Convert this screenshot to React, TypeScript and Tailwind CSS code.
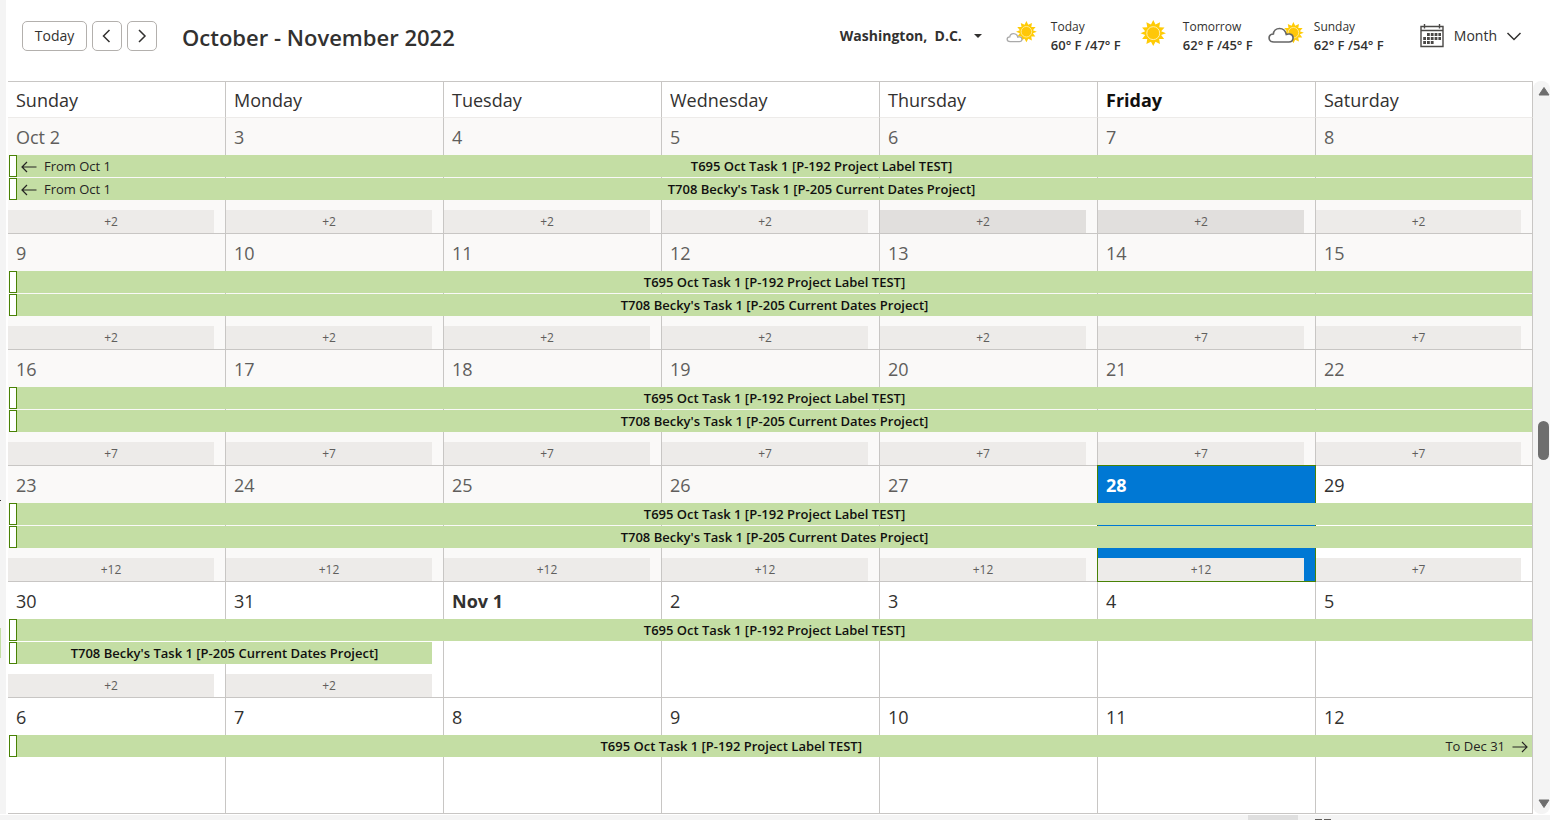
import React from "react";

type Day = { label: string; more?: string; past?: boolean; today?: boolean; strong?: boolean; dark?: boolean };
type Bar = { title: string; from?: string; to?: string; span?: "two" };
type Week = { days: Day[]; bars: Bar[] };

const A = "T695 Oct Task 1 [P-192 Project Label TEST]";
const B = "T708 Becky's Task 1 [P-205 Current Dates Project]";
const both: Bar[] = [{ title: A }, { title: B }];
const past = (label: string, more: string, dark = false): Day => ({ label, more, past: true, dark });

const weeks: Week[] = [
  {
    days: [past("Oct 2", "+2"), past("3", "+2"), past("4", "+2"), past("5", "+2"), past("6", "+2", true), past("7", "+2", true), past("8", "+2")],
    bars: [{ title: A, from: "From Oct 1" }, { title: B, from: "From Oct 1" }],
  },
  {
    days: [past("9", "+2"), past("10", "+2"), past("11", "+2"), past("12", "+2"), past("13", "+2"), past("14", "+7"), past("15", "+7")],
    bars: both,
  },
  {
    days: [past("16", "+7"), past("17", "+7"), past("18", "+7"), past("19", "+7"), past("20", "+7"), past("21", "+7"), past("22", "+7")],
    bars: both,
  },
  {
    days: [past("23", "+12"), past("24", "+12"), past("25", "+12"), past("26", "+12"), past("27", "+12"), { label: "28", more: "+12", today: true }, { label: "29", more: "+7" }],
    bars: both,
  },
  {
    days: [{ label: "30", more: "+2" }, { label: "31", more: "+2" }, { label: "Nov 1", strong: true }, { label: "2" }, { label: "3" }, { label: "4" }, { label: "5" }],
    bars: [{ title: A }, { title: B, span: "two" }],
  },
  {
    days: ["6", "7", "8", "9", "10", "11", "12"].map((label) => ({ label })),
    bars: [{ title: A, to: "To Dec 31" }],
  },
];

const weekdays = ["Sunday", "Monday", "Tuesday", "Wednesday", "Thursday", "Friday", "Saturday"];
const colStart = ["col-start-1", "col-start-2", "col-start-3", "col-start-4", "col-start-5", "col-start-6", "col-start-7"];
const rowStart = ["row-start-2", "row-start-3"];

function Arrow({ flip = false }: { flip?: boolean }) {
  return (
    <svg viewBox="0 0 16 12" className={flip ? "h-3 w-4 shrink-0 rotate-180" : "h-3 w-4 shrink-0"} fill="none" stroke="#252423" strokeWidth="1.2" aria-hidden="true">
      <path d="M15.5 6H1M6 1 1 6l5 5" />
    </svg>
  );
}

function Chevron({ d }: { d: string }) {
  return (
    <svg viewBox="0 0 16 16" className="size-4" fill="none" stroke="#323130" strokeWidth="1.5" aria-hidden="true">
      <path d={d} />
    </svg>
  );
}

function Sun() {
  return (
    <>
      <path
        fill="#ffcb05"
        d="M13 0l2.3 4.600L20 2.400l-.9 5 5.400.2-3.400 4 4.900 1.900-4.900 1.800 3 4.100-5.100.1.900 5-4.600-2.300L13 26.500l-2.300-4.400L6 24.500l.9-5-5.200-.1 3.100-4.100L0 13.500l4.800-1.900-3.200-4 5.300-.2-.9-5 4.700 2.200z"
      />
      <circle cx="13" cy="13.4" r="6.6" fill="#ffc708" stroke="#fff0b0" strokeWidth="1" />
    </>
  );
}

const CLOUD = "M5.5 14.5h14a4 4 0 0 0 .8-7.9c-1.4-.3-2.4 0-3.2.4C16.300 3 13.600 1 10.800 1 7.500 1 5.200 3.500 5 6.600 2.600 6.700 1 8.400 1 10.500c0 2.300 1.900 4 4.500 4z";

function PartlyCloudy() {
  return (
    <svg viewBox="0 0 34 26" className="mt-[2px] h-[26px] w-[34px] self-start" aria-hidden="true">
      <g transform="translate(10 1) scale(.8)"><Sun /></g>
      <path transform="translate(.5 13) scale(.66 .6)" d={CLOUD} fill="#fff" stroke="#aaa" strokeWidth="2" />
    </svg>
  );
}

function Sunny() {
  return (
    <svg viewBox="0 0 34 26" className="mt-[2px] h-[26px] w-[34px] self-start" aria-hidden="true">
      <g transform="translate(2.5 0) scale(.98)"><Sun /></g>
    </svg>
  );
}

function MostlyCloudy() {
  return (
    <svg viewBox="0 0 36 26" className="mt-[2px] h-[26px] w-9 self-start" aria-hidden="true">
      <g transform="translate(15 2) scale(.8)"><Sun /></g>
      <path transform="translate(0 7.500) scale(1.070 1)" d={CLOUD} fill="#fff" stroke="#666" strokeWidth="1.5" />
    </svg>
  );
}

function CalendarIcon() {
  return (
    <svg viewBox="0 0 24 24" className="size-6" fill="none" stroke="#4a4846" strokeWidth="1.4" aria-hidden="true">
      <path d="M1 2.500h22v20H1zM1 6.500h22M4.500 0v4.500M19.500 0v4.500" />
      <path strokeWidth="2.800" strokeDasharray="2.800 1" d="M7 10.500h14M3.200 14.500h17.800M3.200 18.500h10.400" />
    </svg>
  );
}

function Forecast({ icon, day, temps, label }: { icon: React.ReactNode; day: string; temps: string; label: string }) {
  return (
    <div className={label}>
      {icon}
      <div className="leading-[18px] whitespace-pre">
        <div className="text-[12px]">{day}</div>
        <div className="text-[13px] font-semibold">{temps}</div>
      </div>
    </div>
  );
}

function DayCell({ day, index }: { day: Day; index: number }) {
  let cell = "row-start-1 row-span-4 flex min-w-0 flex-col justify-between border-b border-r ";
  if (day.today) cell += "z-[1] -mt-px -ml-px border-t border-l border-[#498205] bg-[#0078d4] font-bold text-white ";
  else if (day.past) cell += "border-[#c8c6c4] bg-[#faf9f8] text-[#605e5c] ";
  else cell += "border-[#c8c6c4] bg-white text-[#323130] ";
  if (day.strong) cell += "font-bold ";
  return (
    <div className={cell + colStart[index]}>
      <div className="px-2 pt-[7px] text-[18px] leading-6">{day.label}</div>
      {day.more && (
        <button
          className={
            "mr-[11px] h-[23px] pt-px text-[12px] leading-[22px] font-normal text-[#605e5c] " + (day.dark ? "bg-[#e1dfdd]" : "bg-[#edebe9]")
          }
        >
          {day.more}
        </button>
      )}
    </div>
  );
}

function EventBar({ bar, row }: { bar: Bar; row: number }) {
  return (
    <button
      className={
        "z-[2] ml-px flex h-[22px] min-w-0 items-end bg-[#c4dea4] text-[13px] leading-[21px] text-[#252423] " +
        rowStart[row] +
        (bar.span === "two" ? " col-start-1 col-span-2 mr-3" : " col-start-1 col-span-7 mr-px")
      }
    >
      <span className="w-2 shrink-0 self-stretch border border-[#498205] bg-white" />
      {bar.from && (
        <span className="flex items-center gap-[7px] pl-1">
          <Arrow />
          {bar.from}
        </span>
      )}
      <span className="min-w-0 flex-1 truncate text-center font-semibold text-[#11100f]">{bar.title}</span>
      {bar.to && (
        <span className="flex items-center gap-[7px] pr-1">
          {bar.to}
          <Arrow flip />
        </span>
      )}
    </button>
  );
}

export default function App() {
  return (
    <div className="flex min-h-screen flex-col bg-[#f4f4f4] font-['Open_Sans','Noto_Sans',sans-serif] text-[#323130]">
      <div className="flex flex-1">
        <div className="flex w-[6px] shrink-0 flex-col pt-[500px]">
          <div className="h-px w-px bg-[#323130]" />
          <div className="mt-[127px] h-[30px] w-px bg-[#c4dea4]" />
        </div>
        <main className="flex min-w-0 flex-1 flex-col bg-white pl-[2px]">
          <header className="flex h-[81px] shrink-0 items-start justify-between pt-[18px] pl-[14px]">
            <div className="flex items-center pt-[3px]">
              <button className="h-[30px] w-[65px] rounded-[5px] border border-[#b3b0ad] text-[14px] leading-5">Today</button>
              <button aria-label="Previous" className="ml-[5px] flex size-[30px] items-center justify-center rounded-[5px] border border-[#b3b0ad]">
                <Chevron d="M10.500 2 4.500 8l6 6" />
              </button>
              <button aria-label="Next" className="ml-[5px] flex size-[30px] items-center justify-center rounded-[5px] border border-[#b3b0ad]">
                <Chevron d="M5 2l6 6-6 6" />
              </button>
              <h1 className="ml-[25px] pt-[2px] text-[22px] leading-7 font-semibold">October - November 2022</h1>
            </div>
            <div className="flex items-center pr-[28px]">
              <button className="flex items-center gap-3 text-[14px] leading-5 font-bold whitespace-pre">
                Washington,  D.C.
                <svg viewBox="0 0 8 4" className="h-1 w-2" fill="#323130" aria-hidden="true"><path d="M0 0h8L4 4z" /></svg>
              </button>
              <Forecast icon={<PartlyCloudy />} day="Today" temps="60° F /47° F" label="ml-6 flex w-[132px] items-center gap-[11px]" />
              <Forecast icon={<Sunny />} day="Tomorrow" temps="62° F /45° F" label="flex w-[130px] items-center gap-[11px]" />
              <Forecast icon={<MostlyCloudy />} day="Sunday" temps="62° F /54° F" label="flex w-[152px] items-center gap-[10px]" />
              <button className="flex items-center text-[14px] leading-5">
                <CalendarIcon />
                <span className="mr-[9px] ml-[10px]">Month</span>
                <Chevron d="M1.500 5 8 11.500 14.500 5" />
              </button>
            </div>
          </header>
          <div className="flex flex-1">
            <section className="flex min-w-0 flex-1 flex-col border-t border-[#c8c6c4]">
              <div className="grid h-9 shrink-0 grid-cols-[repeat(6,218fr)_217fr] text-[18px] leading-[34px]">
                {weekdays.map((d) => (
                  <div key={d} className={"border-r border-b border-r-[#c8c6c4] border-b-[#edebe9] px-2 pt-px " + (d === "Friday" ? "font-bold text-[#11100f]" : "")}>
                    {d}
                  </div>
                ))}
              </div>
              {weeks.map((w, i) => (
                <div key={i} className="grid min-h-[116px] flex-1 grid-cols-[repeat(6,218fr)_217fr] grid-rows-[36px_22px_22px_1fr] gap-y-px">
                  {w.days.map((d, j) => (
                    <DayCell key={d.label} day={d} index={j} />
                  ))}
                  {w.bars.map((b, j) => (
                    <EventBar key={j} bar={b} row={j} />
                  ))}
                </div>
              ))}
            </section>
            <div className="flex w-[17px] shrink-0 flex-col items-center justify-between rounded-t-[8px] rounded-b-[8px] bg-[#f4f4f4] pt-[6px] pb-[6px] pl-[4px]">
              <svg viewBox="0 0 12 9" className="h-[9px] w-3" fill="#6e6e6e" aria-hidden="true"><path d="M6 0.500 11 8H1z" stroke="#6e6e6e" strokeLinejoin="round" /></svg>
              <div className="mb-[14px] h-[39px] w-[11px] rounded-full bg-[#6e6e6e]" />
              <svg viewBox="0 0 12 9" className="h-[9px] w-3" fill="#6e6e6e" aria-hidden="true"><path d="M6 8.500 11 1H1z" stroke="#6e6e6e" strokeLinejoin="round" /></svg>
            </div>
          </div>
        </main>
      </div>
      <footer className="flex h-[6px] shrink-0 items-end justify-end border-t border-white pr-[219px]">
        <div className="mr-[17px] h-[5px] w-[50px] bg-[#dfdfdf]" />
        <div className="mr-[2px] h-px w-[7px] bg-[#605e5c]" />
        <div className="h-px w-[7px] bg-[#605e5c]" />
      </footer>
    </div>
  );
}
